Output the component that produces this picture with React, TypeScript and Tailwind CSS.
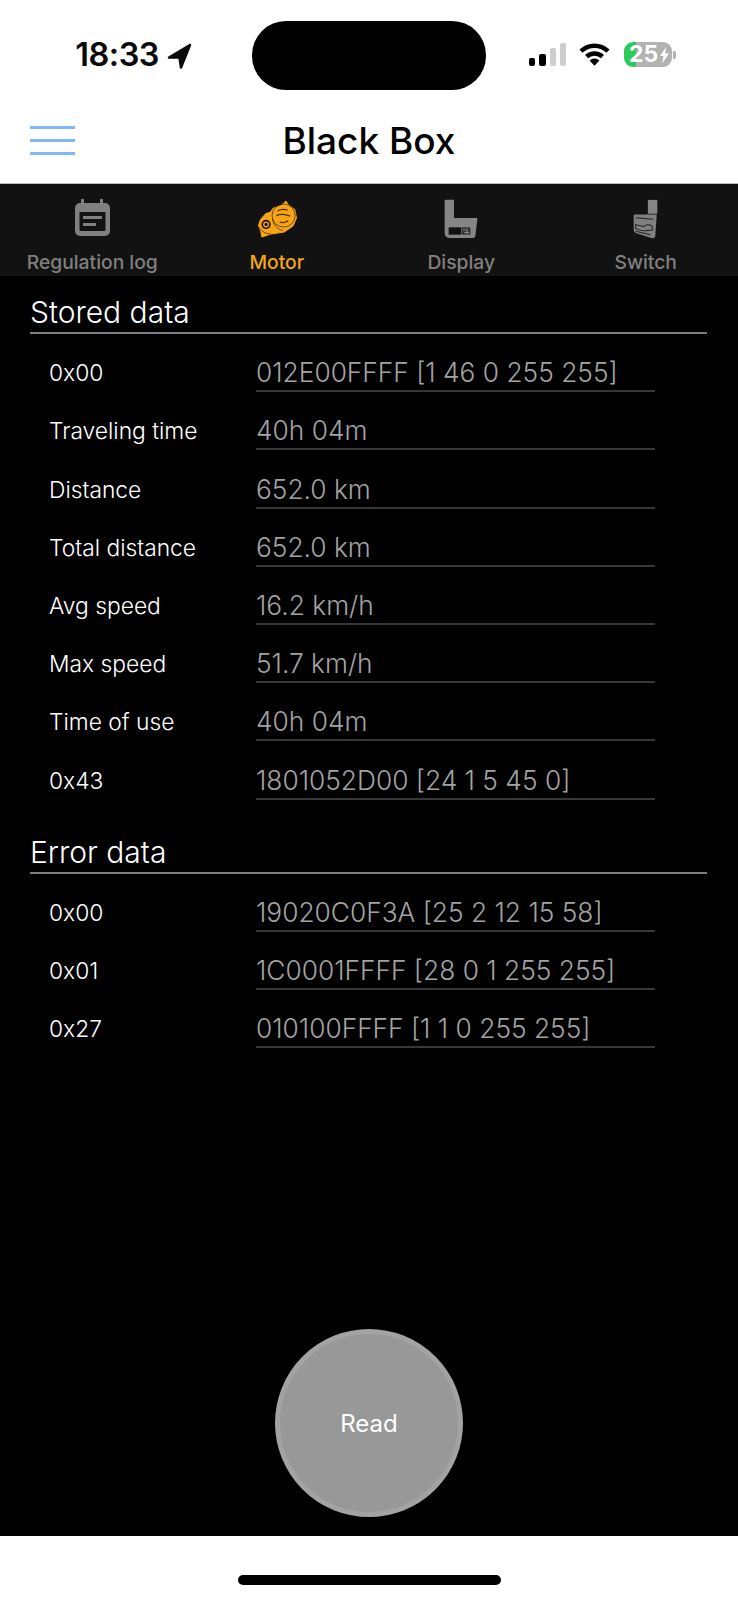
const stored = [
  ["0x00", "012E00FFFF [1 46 0 255 255]"],
  ["Traveling time", "40h 04m"],
  ["Distance", "652.0 km"],
  ["Total distance", "652.0 km"],
  ["Avg speed", "16.2 km/h"],
  ["Max speed", "51.7 km/h"],
  ["Time of use", "40h 04m"],
  ["0x43", "1801052D00 [24 1 5 45 0]"],
];

const errors = [
  ["0x00", "19020C0F3A [25 2 12 15 58]"],
  ["0x01", "1C0001FFFF [28 0 1 255 255]"],
  ["0x27", "010100FFFF [1 1 0 255 255]"],
];

function LocationArrow() {
  return (
    <svg width="25" height="26" viewBox="0 0 25 26" className="ml-[8px]">
      <path d="M23 2 2 14.5h10.5L14 24.5Z" fill="#0a0a0a" stroke="#0a0a0a" strokeWidth="2.5" strokeLinejoin="round" />
    </svg>
  );
}

function SignalBars() {
  return (
    <div className="flex items-end gap-[4px]">
      <div className="h-[8px] w-[6px] rounded-[2px] bg-black" />
      <div className="h-[12px] w-[7px] rounded-[2px] bg-black" />
      <div className="h-[18px] w-[6px] rounded-[2px] bg-[#cdcdcd]" />
      <div className="h-[23px] w-[6px] rounded-[2px] bg-[#cdcdcd]" />
    </div>
  );
}

function Wifi() {
  return (
    <svg width="31" height="23" viewBox="0 0 31 23">
      <path d="M2 8.2a19.5 19.5 0 0 1 27 0" fill="none" stroke="#000" strokeWidth="4.5" />
      <path d="M7.6 13.6a11.6 11.6 0 0 1 15.8 0" fill="none" stroke="#000" strokeWidth="4.5" />
      <path d="M10.6 17.6a7 7 0 0 1 9.8 0L15.5 22.8Z" fill="#000" />
    </svg>
  );
}

function Battery() {
  return (
    <div className="flex items-center">
      <div className="flex h-[25px] w-[48px] items-center rounded-[9px] bg-[linear-gradient(90deg,#30c85a_26%,#b2b2b2_26%)] pl-[5px] text-[23px] font-bold leading-none text-white">
        <span>25</span>
        <svg width="9" height="16" viewBox="0 0 9 16" className="ml-[2px]">
          <path d="M6 0 0 9h3.4L2.6 16 9 6.6H5.2Z" fill="#fff" />
        </svg>
      </div>
      <div className="ml-[1px] h-[8px] w-[3px] rounded-r-[2px] bg-[#b2b2b2]" />
    </div>
  );
}

function CalendarIcon() {
  return (
    <svg width="35" height="37" viewBox="0 0 35 37">
      <path
        fillRule="evenodd"
        fill="#808080"
        d="M6 0h3v4h16V0h3v4h2a5 5 0 0 1 5 5v23a5 5 0 0 1-5 5H5a5 5 0 0 1-5-5V9a5 5 0 0 1 5-5h1ZM4.5 13v18a1 1 0 0 0 1 1h24a1 1 0 0 0 1-1V13Z"
      />
      <rect x="8" y="17" width="19" height="3" fill="#808080" />
      <rect x="8" y="24" width="13" height="3" fill="#808080" />
    </svg>
  );
}

function MotorIcon() {
  return (
    <svg width="40" height="38" viewBox="78 45 120 115" className="mt-[1px]">
      <path
        d="M92 157 89 140 82 122 88 104 104 86 118 82 126 70 150 62 165 48 172 59 192 74 197 100 186 124 160 142 120 148Z"
        fill="#f7a513"
        stroke="#f7a513"
        strokeWidth="3"
        strokeLinejoin="round"
      />
      <circle cx="158" cy="92" r="35" fill="none" stroke="#2a1c05" strokeWidth="2" />
      <path d="M140 78q14-8 30-2M136 92q20-8 42 2M146 112q14 4 26-4" fill="none" stroke="#4a3208" strokeWidth="4" />
      <path d="M124 100q4 30 32 38M84 128q12 20 36 20" fill="none" stroke="#2a1c05" strokeWidth="2" />
      <circle cx="105" cy="119" r="14" fill="#1a1206" />
      <circle cx="105" cy="119" r="9" fill="#f7a513" />
      <circle cx="105" cy="119" r="5" fill="#1a1206" />
    </svg>
  );
}

function DisplayIcon() {
  return (
    <svg width="34" height="40" viewBox="43 25 102 120">
      <path d="M45 27h28v55h68q3 0 2 4l-6 50q-1 6-8 6H62q-17 0-17-14Z" fill="#858585" />
      <rect x="57" y="110" width="38" height="22" fill="#111" />
      <rect x="97" y="110" width="25" height="22" fill="#333" />
      <path d="M100 118h8M112 114v14M104 126h14" stroke="#999" strokeWidth="3" />
    </svg>
  );
}

function SwitchIcon() {
  return (
    <svg width="25" height="41" viewBox="68 25 74 120">
      <rect x="112" y="27" width="28" height="41" fill="#858585" />
      <path d="M74 70h62q3 0 2 4l-4 58q-1 10-12 8L78 126q-8-2-8-10V74q0-4 4-4Z" fill="#808080" />
      <path d="M76 80 128 84M76 100q14 4 24 6 10-10 24-2l2 12-24 2q-12 0-26-6ZM76 120l44 10" fill="none" stroke="#222" strokeWidth="3" />
    </svg>
  );
}

const tabs = [
  { label: "Regulation log", icon: <CalendarIcon />, active: false },
  { label: "Motor", icon: <MotorIcon />, active: true },
  { label: "Display", icon: <DisplayIcon />, active: false },
  { label: "Switch", icon: <SwitchIcon />, active: false },
];

function SectionTitle({ title }: { title: string }) {
  return (
    <div className="flex items-end border-b-2 border-[#7c7c7c] pb-[2px]">
      <h2 className="text-[30px] font-light leading-[36px] text-white">{title}</h2>
    </div>
  );
}

function DataRow({ label, value }: { label: string; value: string }) {
  return (
    <div className="flex h-[58.2px] items-end pl-[19px] pr-[52px]">
      <span className="w-[207px] shrink-0 pb-[4px] text-[22.8px] font-[350] leading-[30px] text-white">{label}</span>
      <span className="flex-1 border-b-2 border-[#383838] pb-[2px] text-[26.3px] font-light leading-[30px] text-[#a3a3a3]">
        {value}
      </span>
    </div>
  );
}

export default function App() {
  return (
    <div className="flex h-[1600px] w-full flex-col bg-white font-['Inter',sans-serif]">
      <header className="h-[184px] shrink-0 border-b border-[#bdbdbd]">
        <div className="flex h-[90px] items-end">
          <div className="flex h-[69px] w-[252px] items-center justify-end pr-[60px]">
            <span className="text-[32.5px] font-semibold leading-none tracking-[-0.5px] text-[#0a0a0a]">18:33</span>
            <LocationArrow />
          </div>
          <div className="h-[69px] w-[234px] rounded-[34px] bg-black" />
          <div className="flex h-[69px] flex-1 items-center pb-[2px] pl-[43px]">
            <SignalBars />
            <div className="ml-[13px]">
              <Wifi />
            </div>
            <div className="ml-[14px]">
              <Battery />
            </div>
          </div>
        </div>
        <div className="mt-[18px] grid h-[64px] grid-cols-[1fr_auto_1fr] items-center px-[30px]">
          <div className="flex w-[45px] flex-col gap-[10px]">
            <div className="h-[3px] bg-[#7fb9f6]" />
            <div className="h-[3px] bg-[#7fb9f6]" />
            <div className="h-[3px] bg-[#7fb9f6]" />
          </div>
          <h1 className="text-[37px] font-medium leading-none text-black">Black Box</h1>
          <div />
        </div>
      </header>

      <main className="flex flex-1 flex-col bg-black">
        <nav className="grid h-[92px] shrink-0 grid-cols-4 bg-[#121212]">
          {tabs.map((tab) => (
            <div key={tab.label} className="flex flex-col items-center pt-[15px]">
              <div className="flex h-[41px] items-start">{tab.icon}</div>
              <span
                className={`mt-[11px] text-[19.3px] leading-[22px] ${tab.active ? "font-medium text-[#f4a51c]" : "font-[450] text-[#808080]"}`}
              >
                {tab.label}
              </span>
            </div>
          ))}
        </nav>

        <section className="pl-[30px] pr-[31px] pt-[18px]">
          <SectionTitle title="Stored data" />
        </section>
        <div className="pl-[30px] pr-[31px]">
          {stored.map(([label, value]) => (
            <DataRow key={label} label={label} value={value} />
          ))}
        </div>

        <section className="pl-[30px] pr-[31px] pt-[34px]">
          <SectionTitle title="Error data" />
        </section>
        <div className="pl-[30px] pr-[31px]">
          {errors.map(([label, value]) => (
            <DataRow key={label} label={label} value={value} />
          ))}
        </div>

        <div className="mb-[19px] mt-auto flex justify-center">
          <button className="flex h-[188px] w-[188px] items-center justify-center rounded-full border-[5px] border-[#a3a3a3] bg-[#979897] pt-[2px] text-[24px] text-white">
            Read
          </button>
        </div>
      </main>

      <footer className="flex h-[64px] shrink-0 justify-center pt-[39px]">
        <div className="h-[10px] w-[263px] rounded-full bg-black" />
      </footer>
    </div>
  );
}
